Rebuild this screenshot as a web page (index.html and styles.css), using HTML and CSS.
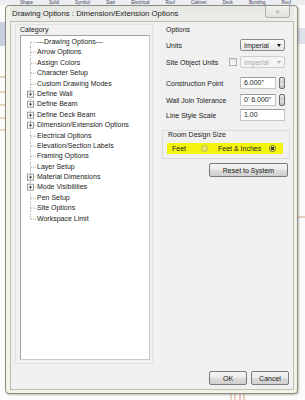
FILE: index.html
```html
<!DOCTYPE html>
<html lang="en">
<head>
    <meta charset="UTF-8">
    <meta name="viewport" content="width=device-width, initial-scale=1.0">
    <title>Drawing Options : Dimension/Extension Options</title>
    <link rel="stylesheet" href="styles.css">
</head>
<body>
    <svg class="sprite" width="0" height="0" aria-hidden="true">
        <symbol id="t-first" viewBox="0 0 16 10.4">
            <path d="M9.5 5.2V10.4M10 5.2H15" class="dots"/>
        </symbol>
        <symbol id="t-mid" viewBox="0 0 16 10.4">
            <path d="M9.5 0V10.4M10 5.2H15" class="dots"/>
        </symbol>
        <symbol id="t-last" viewBox="0 0 16 10.4">
            <path d="M9.5 0V5.2M10 5.2H15" class="dots"/>
        </symbol>
        <symbol id="t-plus" viewBox="0 0 16 10.4">
            <path d="M9.5 0V2.2M9.5 8.2V10.4M12.5 5.2H15" class="dots"/>
            <rect x="6.5" y="2.2" width="6" height="6" fill="#fff" stroke="#999"/>
            <path d="M7.8 5.2H11.2M9.5 3.5V6.9" stroke="#333" stroke-width="0.8"/>
        </symbol>
    </svg>

    <div class="desktop">
        <div class="toolbar">
            <span>Shape</span><span>Solid</span><span>Symbol</span><span>Stair</span><span>Electrical</span><span>Roof</span><span>Cabinet</span><span>Deck</span><span>Bonding</span><span>Roof</span>
        </div>

        <!-- plan drawing peeking out behind the dialog -->
        <svg class="plan" width="305" height="400" viewBox="0 0 305 400">
            <rect x="0" y="22" width="5" height="24" fill="#c9cfe0"/>
            <rect x="298" y="28" width="7" height="16" fill="#dde1ea"/>
            <path d="M0 77H5M0 92H5M0 105H5M0 118H5M0 130H5" stroke="#cfa880"/>
            <path d="M297 217H305" stroke="#cfa880"/>
            <path d="M231 393V400M235 393V400M244 393V400" stroke="#cfa880"/>
            <path d="M240 393V400" stroke="#d88a8a"/>
        </svg>

        <div class="dialog">
            <div class="titlebar">
                <span class="title">Drawing Options : Dimension/Extension Options</span>
                <span class="close">&#10005;</span>
            </div>

            <div class="client">
                <div class="panes">
                    <div class="category-pane">
                        <div class="caption">Category</div>
                        <ul class="tree">
                            <li><svg class="twig"><use href="#t-first"/></svg>---Drawing Options---</li>
                            <li><svg class="twig"><use href="#t-mid"/></svg>Arrow Options</li>
                            <li><svg class="twig"><use href="#t-mid"/></svg>Assign Colors</li>
                            <li><svg class="twig"><use href="#t-mid"/></svg>Character Setup</li>
                            <li><svg class="twig"><use href="#t-mid"/></svg>Custom Drawing Modes</li>
                            <li><svg class="twig"><use href="#t-plus"/></svg>Define Wall</li>
                            <li><svg class="twig"><use href="#t-plus"/></svg>Define Beam</li>
                            <li><svg class="twig"><use href="#t-plus"/></svg>Define Deck Beam</li>
                            <li><svg class="twig"><use href="#t-plus"/></svg>Dimension/Extension Options</li>
                            <li><svg class="twig"><use href="#t-mid"/></svg>Electrical Options</li>
                            <li><svg class="twig"><use href="#t-mid"/></svg>Elevation/Section Labels</li>
                            <li><svg class="twig"><use href="#t-mid"/></svg>Framing Options</li>
                            <li><svg class="twig"><use href="#t-mid"/></svg>Layer Setup</li>
                            <li><svg class="twig"><use href="#t-plus"/></svg>Material Dimensions</li>
                            <li><svg class="twig"><use href="#t-plus"/></svg>Mode Visibilities</li>
                            <li><svg class="twig"><use href="#t-mid"/></svg>Pen Setup</li>
                            <li><svg class="twig"><use href="#t-mid"/></svg>Site Options</li>
                            <li><svg class="twig"><use href="#t-last"/></svg>Workspace Limit</li>
                        </ul>
                    </div>

                    <div class="options-pane">
                        <div class="caption">Options</div>

                        <div class="field units">
                            <span class="field-label">Units</span>
                            <div class="combo"><span>Imperial</span><span class="caret"></span></div>
                        </div>
                        <div class="field site">
                            <span class="field-label">Site Object Units</span>
                            <span class="check"></span>
                            <div class="combo disabled"><span>Imperial</span><span class="caret"></span></div>
                        </div>
                        <div class="field construction">
                            <span class="field-label">Construction Point</span>
                            <div class="textbox short">6.000&quot;</div>
                            <span class="spinner"></span>
                        </div>
                        <div class="field wall">
                            <span class="field-label">Wall Join Tolerance</span>
                            <div class="textbox short">0&#39; 6.000&quot;</div>
                            <span class="spinner"></span>
                        </div>
                        <div class="field line">
                            <span class="field-label">Line Style Scale</span>
                            <div class="textbox wide">1.00</div>
                        </div>

                        <div class="groupbox">
                            <div class="group-caption">Room Design Size</div>
                            <div class="radio-row">
                                <span class="radio-label">Feet</span>
                                <span class="radio"></span>
                                <span class="radio-label inches">Feet &amp; Inches</span>
                                <span class="radio checked"></span>
                            </div>
                        </div>

                        <button class="btn reset">Reset to System</button>
                    </div>
                </div>

                <div class="footer">
                    <button class="btn">OK</button>
                    <button class="btn">Cancel</button>
                </div>
            </div>
        </div>
    </div>
</body>
</html>
```

FILE: styles.css
```css
* {
    box-sizing: border-box;
}

body {
    margin: 0;
    font-family: "Liberation Sans", Arial, sans-serif;
    font-size: 7px;
    color: #222;
    background-color: #fff;
}

.sprite {
    position: absolute;
}

.dots {
    fill: none;
    stroke: #a4a4a4;
    stroke-dasharray: 1 1;
}

.desktop {
    position: relative;
    width: 305px;
    height: 400px;
    overflow: hidden;
    background-color: #fcfcfc;
}

.toolbar {
    display: flex;
    gap: 16px;
    height: 5px;
    padding-left: 20px;
    background-color: #eceef2;
    font-size: 4.5px;
    line-height: 5px;
    color: #3a4260;
    white-space: nowrap;
}

.plan {
    position: absolute;
    left: 0;
    top: 0;
}

/* ===== dialog window ===== */
.dialog {
    position: absolute;
    left: 5px;
    top: 5px;
    width: 293px;
    height: 389px;
    display: flex;
    flex-direction: column;
    padding: 0 3px 3px 4px;
    background-color: #f3f2e9;
    border: 1px solid #8e8d82;
    border-radius: 4px;
    box-shadow: 1px 1px 2px rgba(0, 0, 0, 0.25);
}

.titlebar {
    display: flex;
    align-items: center;
    height: 15px;
    padding-left: 2px;
    background: linear-gradient(#e4e7e3, #eceee8);
}

.title {
    font-size: 7.8px;
    color: #1e1e1e;
    white-space: nowrap;
}

.close {
    align-self: flex-start;
    margin-left: auto;
    margin-right: 4px;
    width: 25px;
    height: 12px;
    display: flex;
    align-items: center;
    justify-content: center;
    font-size: 6px;
    color: #a0a0a0;
    background: linear-gradient(#f1f1ef, #e2e3df);
    border: 1px solid #b4b4ae;
    border-top: none;
    border-radius: 0 0 3px 3px;
}

.client {
    flex: 1;
    display: flex;
    flex-direction: column;
    background-color: #f0f0f0;
    border: 1px solid #bdbdb2;
}

.panes {
    flex: 1;
    display: flex;
}

.caption {
    line-height: 10px;
    white-space: nowrap;
}

/* ===== category tree ===== */
.category-pane {
    margin: 2px 0 0 4px;
    width: 138px;
    height: 340px;
    padding-left: 4px;
    border: 1px solid #e2e2e2;
}

.tree {
    list-style: none;
    margin: 0;
    width: 130px;
    height: 325px;
    padding: 1px 0 0;
    background-color: #fff;
    border: 1px solid #a3a3a3;
    border-right-color: #c9c9c9;
    border-bottom-color: #c9c9c9;
}

.tree li {
    display: flex;
    align-items: center;
    height: 10.4px;
    line-height: 10.4px;
    white-space: nowrap;
}

.twig {
    flex: none;
    width: 16px;
    height: 10.4px;
}

/* ===== options ===== */
.options-pane {
    flex: 1;
    display: flex;
    flex-direction: column;
    margin-left: 7px;
    padding: 3px 3px 0 6px;
}

.field {
    display: flex;
    align-items: center;
    width: 119px;
    height: 12px;
}

.field.units { margin-top: 4px; }
.field.site { margin-top: 5px; }
.field.construction { margin-top: 9px; }
.field.wall { margin-top: 5px; }
.field.line { margin-top: 3px; }

.field-label {
    flex: 1;
    white-space: nowrap;
}

.combo {
    display: flex;
    align-items: center;
    width: 45px;
    height: 12px;
    padding: 0 3px;
    background: linear-gradient(#fafafa, #e6e6e6);
    border: 1px solid #8c8c8c;
    border-radius: 2px;
}

.combo span:first-child {
    flex: 1;
}

.caret {
    width: 0;
    height: 0;
    border-left: 2.5px solid transparent;
    border-right: 2.5px solid transparent;
    border-top: 3px solid #111;
}

.combo.disabled {
    color: #a9a9a9;
    background: #f4f4f4;
    border-color: #cdcdcd;
}

.combo.disabled .caret {
    border-top-color: #b5b5b5;
}

.check {
    width: 8px;
    height: 8px;
    margin-right: 3px;
    background: linear-gradient(#e4e4e4, #fbfbfb);
    border: 1px solid #b1b1b1;
}

.textbox {
    height: 12px;
    padding-left: 3px;
    line-height: 10px;
    background-color: #fff;
    border: 1px solid #c2c4ca;
    border-top-color: #9a9ca2;
    white-space: nowrap;
}

.textbox.short {
    width: 36px;
}

.textbox.wide {
    width: 45px;
}

.spinner {
    width: 6px;
    height: 12px;
    margin-left: 3px;
    background: linear-gradient(#ececec 0%, #c9c9c9 45%, #9a9a9a 50%, #e2e2e2 55%, #bcbcbc 100%);
    border: 1px solid #6e6e6e;
    border-radius: 2px;
}

.groupbox {
    margin: 9px 0 0 -4px;
    width: 128px;
    padding: 0 0 4px 4px;
    border: 1px solid #dcdcdc;
}

.group-caption {
    padding-left: 1px;
    line-height: 8px;
    white-space: nowrap;
}

.radio-row {
    display: flex;
    align-items: center;
    width: 116px;
    height: 11px;
    margin-top: 4px;
    padding-left: 5px;
    background-color: #f4f40e;
}

.radio {
    width: 7px;
    height: 7px;
    margin-left: 15px;
    background-color: #eaea5a;
    border: 1px solid #b9b96a;
    border-radius: 50%;
}

.radio-label.inches {
    margin-left: 10px;
}

.radio.checked {
    margin-left: 8px;
    border-color: #6c6c3a;
    background: radial-gradient(circle, #3a3a2a 0 1.6px, #eaea5a 2px);
}

.btn {
    height: 14px;
    padding: 0;
    font-family: inherit;
    font-size: 7px;
    color: #222;
    background: linear-gradient(#f5f5f5 0%, #ebebeb 45%, #dddddd 50%, #cfcfcf 100%);
    border: 1px solid #7a7a7a;
    border-radius: 2px;
}

.btn.reset {
    align-self: flex-end;
    width: 79px;
    margin: 4px 2px 0 0;
}

.footer {
    display: flex;
    justify-content: flex-end;
    gap: 4px;
    padding: 0 4px 4px 0;
}

.footer .btn {
    width: 38px;
}
```
